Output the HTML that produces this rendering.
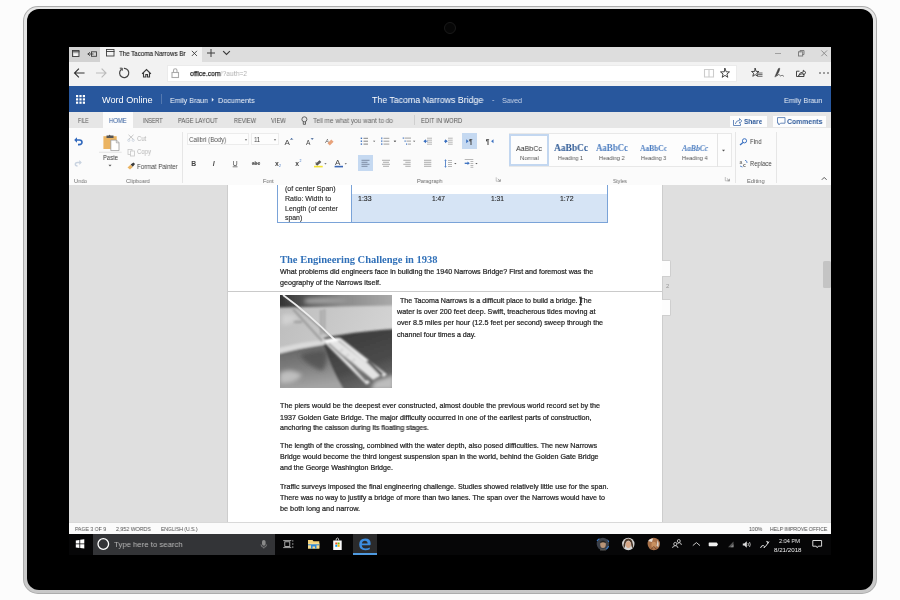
<!DOCTYPE html>
<html><head><meta charset="utf-8">
<style>
*{margin:0;padding:0;box-sizing:border-box}
html,body{width:900px;height:600px;overflow:hidden;background:#fcfcfc;font-family:"Liberation Sans",sans-serif;position:relative}
.a{position:absolute}
.t{position:absolute;white-space:nowrap;line-height:1;will-change:transform}
svg{position:absolute;overflow:visible;will-change:transform}
</style></head><body>
<div class="a" style="left:23px;top:6px;width:854px;height:588px;background:#acacac;border-radius:15px"></div>
<div class="a" style="left:24px;top:7px;width:852px;height:586px;background:linear-gradient(#e6e6e6,#d6d6d6 50%,#c8c8c8);border-radius:14px"></div>
<div class="a" style="left:27px;top:9px;width:846px;height:581px;background:#000;border-radius:12px"></div>
<div class="a" style="left:444px;top:22px;width:12px;height:12px;border-radius:50%;background:#060606;border:1px solid #1a1a1a"></div>
<div class="a" style="left:69px;top:47px;width:762px;height:508px;background:#dcdcdc;"></div>
<div class="a" style="left:69px;top:47px;width:762px;height:15px;background:#dddddd;"></div>
<div class="a" style="left:69px;top:47px;width:31px;height:15px;background:#d2d2d2;"></div>
<div class="a" style="left:100px;top:47px;width:102px;height:15px;background:#f2f2f2;"></div>
<div class="t" id="t0" style="left:119px;top:49.70px;font-size:7.5px;color:#222;font-family:'Liberation Sans',sans-serif;transform:scaleX(0.8237);transform-origin:0 0;-webkit-text-stroke:0.15px #333">The Tacoma Narrows Br</div>
<div class="a" style="left:69px;top:62px;width:762px;height:24px;background:#f2f2f2;"></div>
<div class="a" style="left:167px;top:65px;width:570px;height:17px;background:#fff;border:1px solid #ebebeb"></div>
<div class="t" id="t1" style="left:190px;top:69.50px;font-size:7.5px;color:#222;font-family:'Liberation Sans',sans-serif;transform:scaleX(0.8983);transform-origin:0 0;"><span style="-webkit-text-stroke:0.25px #222">office.com</span><span style="color:#b0b0b0">/?auth=2</span></div>
<svg style="left:0;top:0" width="900" height="600" viewBox="0 0 900 600" fill="none" stroke-linecap="square">
<g stroke="#3c3c3c" stroke-width="1.1">
<!-- tab preview -->
<rect x="72.5" y="50.5" width="6.5" height="6" stroke-width="0.9"/>
<path d="M72.5 51.8H79" stroke-width="0.9"/>
<rect x="73.8" y="53.6" width="3.9" height="2.4" fill="#f4f4f4" stroke="none"/>
<!-- set aside -->
<rect x="91.5" y="51.8" width="5" height="4.5" stroke-width="0.9"/>
<path d="M88 54H93M89.5 52.5L88 54L89.5 55.5" stroke-width="0.9"/>
<!-- favicon -->
<rect x="106.5" y="49.5" width="7.5" height="6.5" stroke-width="0.9"/>
<path d="M106.5 51.5H114" stroke-width="0.9"/>
<!-- close tab -->
<path d="M192.2 51.2L196.6 55.6M196.6 51.2L192.2 55.6" stroke-width="0.9"/>
<!-- plus -->
<path d="M211 49.5V56.5M207.5 53H214.5" stroke-width="1"/>
<!-- chevron -->
<path d="M223.5 51.5L226.5 54.5L229.5 51.5"/>
<!-- window controls -->
<path d="M775.5 53.5H780.5" stroke="#999" stroke-width="0.9"/>
<rect x="798.5" y="51.8" width="4.2" height="4.2" stroke="#777" stroke-width="0.9"/>
<path d="M800 51.8V50.5H804V54.5H802.7" stroke="#777" stroke-width="0.9"/>
<path d="M821.7 50.8L826.7 55.8M826.7 50.8L821.7 55.8" stroke="#888" stroke-width="0.9"/>
<!-- back -->
<path d="M74.5 73H84M78.5 69L74.5 73L78.5 77" stroke="#333"/>
<!-- fwd -->
<path d="M96.5 73H106M102 69L106 73L102 77" stroke="#bbb"/>
<!-- refresh -->
<path d="M121.2 69.5A4.6 4.6 0 1 0 124.5 68.4" stroke="#444" stroke-width="1.2"/>
<path d="M120.3 68.2L122.3 68.2L122.3 70.2" stroke="#444" stroke-width="1"/>
<!-- home -->
<path d="M142.5 73.5L146.5 69.5L150.5 73.5M143.5 72.5V77H145.8V74.5H147.5V77H149.5V72.5" stroke="#3a3a3a"/>
<!-- lock -->
<rect x="172" y="72.5" width="6.5" height="5" stroke="#aaa"/>
<path d="M173.5 72.5V70.5A1.75 1.75 0 0 1 177 70.5V72.5" stroke="#aaa"/>
<!-- reading view -->
<path d="M704.5 69.5H709V77H704.5ZM709 69.5H713.5V77H709Z" stroke="#ccc"/>
<!-- star -->
<path d="M725 68.5L726.2 71.8L729.5 71.9L726.9 74L727.8 77.3L725 75.4L722.2 77.3L723.1 74L720.5 71.9L723.8 71.8Z" stroke="#333" stroke-width="0.9" stroke-linejoin="miter"/>
<!-- hub -->
<path d="M755.2 68.5L756.2 71.4L759 71.5L756.8 73.2L757.6 76.3L755.2 74.6L752.8 76.3L753.6 73.2L751.5 71.5L754.2 71.4Z" stroke="#333" stroke-width="0.9"/>
<path d="M757.5 73H762M758 74.6H762M758.5 76.3H762" stroke="#444" stroke-width="0.8"/>
<!-- pen -->
<path d="M775 76.5L778.3 68.8Q779.5 67.2 779.8 68.8Q779.6 71.5 776.2 76.2Z" fill="#444" stroke="#444" stroke-width="0.5"/>
<path d="M777 75.8Q778.5 73.5 779.5 75Q780.5 76.5 781.5 75.5Q782.5 75 783.5 76" stroke="#444" stroke-width="0.8"/>
<!-- share -->
<path d="M799 71.2H796.5V76.5H804V74.5" stroke="#333" stroke-width="0.9"/>
<path d="M798.8 75.2Q799.5 72 803.3 72V70.2L806 72.6L803.3 75V73.6Q801 73.6 798.8 75.2Z" stroke="#333" stroke-width="0.9" stroke-linejoin="round"/>
</g>
<g fill="#333"><circle cx="820" cy="73" r="0.8"/><circle cx="824" cy="73" r="0.8"/><circle cx="828" cy="73" r="0.8"/></g>
</svg>
<div class="a" style="left:69px;top:86px;width:762px;height:26px;background:#28579d;"></div>
<div class="t" id="t2" style="left:102px;top:95.80px;font-size:9px;color:#fff;font-family:'Liberation Sans',sans-serif;transform:scaleX(1.0149);transform-origin:0 0;">Word Online</div>
<div class="a" style="left:161px;top:94px;width:1px;height:10px;background:#5479b0;"></div>
<div class="t" id="t3" style="left:169.7px;top:96.70px;font-size:7.5px;color:#f2f5fa;font-family:'Liberation Sans',sans-serif;transform:scaleX(0.9397);transform-origin:0 0;">Emily Braun</div>
<div class="t" id="t4" style="left:217.8px;top:96.70px;font-size:7.5px;color:#f2f5fa;font-family:'Liberation Sans',sans-serif;transform:scaleX(0.9647);transform-origin:0 0;">Documents</div>
<div class="t" id="t5" style="left:371.6px;top:96.10px;font-size:9px;color:#fff;font-family:'Liberation Sans',sans-serif;transform:scaleX(0.9781);transform-origin:0 0;">The Tacoma Narrows Bridge</div>
<div class="t" id="t6" style="left:491.5px;top:96.00px;font-size:7.5px;color:#c9d5ea;font-family:'Liberation Sans',sans-serif;">-</div>
<div class="t" id="t7" style="left:502px;top:96.82px;font-size:7.5px;color:#c9d5ea;font-family:'Liberation Sans',sans-serif;transform:scaleX(0.9398);transform-origin:0 0;">Saved</div>
<div class="t" id="t8" style="left:783.7px;top:96.82px;font-size:7.5px;color:#e8eef7;font-family:'Liberation Sans',sans-serif;transform:scaleX(0.9471);transform-origin:0 0;">Emily Braun</div>
<div class="a" style="left:69px;top:112px;width:762px;height:16px;background:#e6e6e6;"></div>
<div class="a" style="left:103px;top:112px;width:30px;height:16px;background:#fcfcfc;"></div>
<div class="t" id="t9" style="left:78px;top:118.30px;font-size:6.8px;color:#555;font-family:'Liberation Sans',sans-serif;transform:scaleX(0.7452);transform-origin:0 0;">FILE</div>
<div class="t" id="t10" style="left:142.9px;top:118.30px;font-size:6.8px;color:#555;font-family:'Liberation Sans',sans-serif;transform:scaleX(0.7859);transform-origin:0 0;">INSERT</div>
<div class="t" id="t11" style="left:178px;top:118.30px;font-size:6.8px;color:#555;font-family:'Liberation Sans',sans-serif;transform:scaleX(0.8495);transform-origin:0 0;">PAGE LAYOUT</div>
<div class="t" id="t12" style="left:233.7px;top:118.30px;font-size:6.8px;color:#555;font-family:'Liberation Sans',sans-serif;transform:scaleX(0.8205);transform-origin:0 0;">REVIEW</div>
<div class="t" id="t13" style="left:271px;top:118.30px;font-size:6.8px;color:#555;font-family:'Liberation Sans',sans-serif;transform:scaleX(0.8460);transform-origin:0 0;">VIEW</div>
<div class="t" id="t14" style="left:420.6px;top:118.30px;font-size:6.8px;color:#555;font-family:'Liberation Sans',sans-serif;transform:scaleX(0.8682);transform-origin:0 0;">EDIT IN WORD</div>
<div class="t" id="t15" style="left:108.8px;top:118.30px;font-size:6.8px;color:#2b579a;font-family:'Liberation Sans',sans-serif;transform:scaleX(0.8674);transform-origin:0 0;">HOME</div>
<div class="t" id="t16" style="left:312.5px;top:118.30px;font-size:6.8px;color:#666;font-family:'Liberation Sans',sans-serif;transform:scaleX(0.9538);transform-origin:0 0;">Tell me what you want to do</div>
<div class="a" style="left:414px;top:115px;width:1px;height:10px;background:#cfcfcf;"></div>
<div class="a" style="left:730px;top:115.5px;width:36.6px;height:11px;background:#fdfdfd;"></div>
<div class="a" style="left:772.7px;top:115.5px;width:53.8px;height:11px;background:#fdfdfd;"></div>
<div class="t" id="t17" style="left:744px;top:117.70px;font-size:7.5px;color:#2f5b9b;font-family:'Liberation Sans',sans-serif;transform:scaleX(0.8773);transform-origin:0 0;font-weight:bold">Share</div>
<div class="t" id="t18" style="left:787.3px;top:117.70px;font-size:7.5px;color:#2f5b9b;font-family:'Liberation Sans',sans-serif;transform:scaleX(0.9158);transform-origin:0 0;font-weight:bold">Comments</div>
<div class="a" style="left:69px;top:128px;width:762px;height:57px;background:#fbfbfb;"></div>
<svg style="left:0;top:0" width="900" height="600" viewBox="0 0 900 600"><rect x="76.0" y="95.0" width="2.2" height="2.2" fill="#fff"/><rect x="76.0" y="98.3" width="2.2" height="2.2" fill="#fff"/><rect x="76.0" y="101.6" width="2.2" height="2.2" fill="#fff"/><rect x="79.4" y="95.0" width="2.2" height="2.2" fill="#fff"/><rect x="79.4" y="98.3" width="2.2" height="2.2" fill="#fff"/><rect x="79.4" y="101.6" width="2.2" height="2.2" fill="#fff"/><rect x="82.8" y="95.0" width="2.2" height="2.2" fill="#fff"/><rect x="82.8" y="98.3" width="2.2" height="2.2" fill="#fff"/><rect x="82.8" y="101.6" width="2.2" height="2.2" fill="#fff"/><path d="M211.8 97.8L213.8 99.8L211.8 101.8Z" fill="#e8eef7"/></svg>
<div class="t" id="t19" style="left:74px;top:179.02px;font-size:5.8px;color:#6a6a6a;font-family:'Liberation Sans',sans-serif;transform:scaleX(0.9380);transform-origin:0 0;">Undo</div>
<div class="t" id="t20" style="left:102.6px;top:154.01px;font-size:7.3px;color:#444;font-family:'Liberation Sans',sans-serif;transform:scaleX(0.8087);transform-origin:0 0;">Paste</div>
<div class="t" id="t21" style="left:136.7px;top:134.71px;font-size:7.3px;color:#b5b5b5;font-family:'Liberation Sans',sans-serif;transform:scaleX(0.8187);transform-origin:0 0;">Cut</div>
<div class="t" id="t22" style="left:137px;top:148.41px;font-size:7.3px;color:#b5b5b5;font-family:'Liberation Sans',sans-serif;transform:scaleX(0.8213);transform-origin:0 0;">Copy</div>
<div class="t" id="t23" style="left:137px;top:162.71px;font-size:7.3px;color:#444;font-family:'Liberation Sans',sans-serif;transform:scaleX(0.8433);transform-origin:0 0;">Format Painter</div>
<div class="t" id="t24" style="left:126.3px;top:179.02px;font-size:5.8px;color:#6a6a6a;font-family:'Liberation Sans',sans-serif;transform:scaleX(0.9673);transform-origin:0 0;">Clipboard</div>
<div class="a" style="left:187.3px;top:133.3px;width:62px;height:12px;background:#fdfdfd;border:1px solid #ececec"></div>
<div class="a" style="left:250.7px;top:133.3px;width:28px;height:12px;background:#fdfdfd;border:1px solid #ececec"></div>
<div class="t" id="t25" style="left:188.7px;top:136.01px;font-size:7.3px;color:#555;font-family:'Liberation Sans',sans-serif;transform:scaleX(0.8438);transform-origin:0 0;">Calibri (Body)</div>
<div class="t" id="t26" style="left:254px;top:136.01px;font-size:7.3px;color:#444;font-family:'Liberation Sans',sans-serif;transform:scaleX(0.7918);transform-origin:0 0;">11</div>
<div class="t" id="t27" style="left:263.3px;top:179.02px;font-size:5.8px;color:#6a6a6a;font-family:'Liberation Sans',sans-serif;transform:scaleX(0.9217);transform-origin:0 0;">Font</div>
<div class="t" id="t28" style="left:417.3px;top:179.02px;font-size:5.8px;color:#6a6a6a;font-family:'Liberation Sans',sans-serif;transform:scaleX(0.9380);transform-origin:0 0;">Paragraph</div>
<div class="t" id="t29" style="left:613px;top:179.02px;font-size:5.8px;color:#6a6a6a;font-family:'Liberation Sans',sans-serif;transform:scaleX(0.8673);transform-origin:0 0;">Styles</div>
<div class="t" id="t30" style="left:746.9px;top:179.02px;font-size:5.8px;color:#6a6a6a;font-family:'Liberation Sans',sans-serif;transform:scaleX(0.9755);transform-origin:0 0;">Editing</div>
<div class="t" id="t31" style="left:749.5px;top:137.62px;font-size:7.3px;color:#444;font-family:'Liberation Sans',sans-serif;transform:scaleX(0.8097);transform-origin:0 0;">Find</div>
<div class="t" id="t32" style="left:749.8px;top:159.62px;font-size:7.3px;color:#444;font-family:'Liberation Sans',sans-serif;transform:scaleX(0.8103);transform-origin:0 0;">Replace</div>
<div class="a" style="left:508.7px;top:133.3px;width:223px;height:33.4px;background:#fdfdfd;border:1px solid #e8e8e8"></div>
<div class="a" style="left:716.6px;top:133.3px;width:1px;height:33.4px;background:#e4e4e4;"></div>
<div class="a" style="left:508.8px;top:134.2px;width:39.8px;height:31.4px;background:#fdfdfd;border:2px solid #c3d7f0"></div>
<div class="t" id="t33" style="left:516.3px;top:144.71px;font-size:8px;color:#333;font-family:'Liberation Sans',sans-serif;transform:scaleX(0.8856);transform-origin:0 0;">AaBbCc</div>
<div class="t" id="t34" style="left:520px;top:155.00px;font-size:6.2px;color:#555;font-family:'Liberation Sans',sans-serif;transform:scaleX(0.9522);transform-origin:0 0;">Normal</div>
<div class="t" id="t35" style="left:553.7px;top:143.02px;font-size:10px;color:#2e5a96;font-family:'Liberation Serif',serif;transform:scaleX(0.9412);transform-origin:0 0;font-weight:bold">AaBbCc</div>
<div class="t" id="t36" style="left:558px;top:155.00px;font-size:6.2px;color:#555;font-family:'Liberation Sans',sans-serif;transform:scaleX(0.8859);transform-origin:0 0;">Heading 1</div>
<div class="t" id="t37" style="left:596px;top:144.01px;font-size:9.5px;color:#4a7cc0;font-family:'Liberation Serif',serif;transform:scaleX(0.9326);transform-origin:0 0;font-weight:bold">AaBbCc</div>
<div class="t" id="t38" style="left:599px;top:155.00px;font-size:6.2px;color:#555;font-family:'Liberation Sans',sans-serif;transform:scaleX(0.9107);transform-origin:0 0;">Heading 2</div>
<div class="t" id="t39" style="left:640px;top:145.01px;font-size:8.2px;color:#4a7cc0;font-family:'Liberation Serif',serif;transform:scaleX(0.9128);transform-origin:0 0;font-weight:bold">AaBbCc</div>
<div class="t" id="t40" style="left:640.7px;top:155.00px;font-size:6.2px;color:#555;font-family:'Liberation Sans',sans-serif;transform:scaleX(0.8966);transform-origin:0 0;">Heading 3</div>
<div class="t" id="t41" style="left:681.7px;top:145.01px;font-size:8.2px;color:#4a7cc0;font-family:'Liberation Serif',serif;transform:scaleX(0.9320);transform-origin:0 0;font-weight:bold;font-style:italic">AaBbCc</div>
<div class="t" id="t42" style="left:682px;top:155.00px;font-size:6.2px;color:#555;font-family:'Liberation Sans',sans-serif;transform:scaleX(0.9072);transform-origin:0 0;">Heading 4</div>
<div class="a" style="left:182px;top:132px;width:1px;height:51px;background:#e6e6e6;"></div>
<div class="a" style="left:734.6px;top:132px;width:1px;height:51px;background:#e6e6e6;"></div>
<div class="a" style="left:776px;top:132px;width:1px;height:51px;background:#e6e6e6;"></div>
<div class="a" style="left:358px;top:155.3px;width:15px;height:16px;background:#c5d9f1;"></div>
<div class="a" style="left:462px;top:133.3px;width:14.7px;height:16px;background:#c5d9f1;"></div>
<svg style="left:0;top:0" width="900" height="600" viewBox="0 0 900 600" fill="none">
<!-- undo -->
<path d="M75.5 140H79.5Q82 140 82 142.3Q82 144.6 79 144.6H78" stroke="#3068bd" stroke-width="1.6"/>
<path d="M74.2 140L77 137.3V142.7Z" fill="#3068bd"/>
<!-- redo (disabled) -->
<path d="M81 162.5H77.5Q75.3 162.5 75.3 164.3Q75.3 166 77.5 166" stroke="#c9d3e0" stroke-width="1.4"/>
<path d="M81.8 162.5L79.3 160V165Z" fill="#c9d3e0"/>
<!-- paste clipboard -->
<rect x="103.4" y="136.2" width="13.3" height="12.8" fill="#ebb462"/>
<path d="M106.5 138V135.6H108.8Q109.5 133.8 110.5 135.6H113.5V138Z" fill="#555"/>
<path d="M110.8 140.1H116.5L119 142.6V150.6H110.8Z" fill="#fff" stroke="#9a9a9a" stroke-width="0.8"/>
<path d="M116.3 140.1V142.8H119" stroke="#9a9a9a" stroke-width="0.7"/>
<path d="M99 152.3H121.7" stroke="#dedede" stroke-width="0.8"/>
<path d="M108.5 164.7H111.5L110 166.5Z" fill="#555"/>
<!-- cut -->
<path d="M128.5 134.8L133.5 139.5M133.5 134.8L128.5 139.5" stroke="#c0c0c0" stroke-width="0.9"/>
<circle cx="128.8" cy="140.3" r="1.1" stroke="#c8d0dc" stroke-width="0.8"/><circle cx="133.2" cy="140.3" r="1.1" stroke="#c8d0dc" stroke-width="0.8"/>
<!-- copy -->
<rect x="128" y="149.5" width="4" height="5" stroke="#c6c6c6" stroke-width="0.8"/>
<rect x="130.5" y="151" width="4" height="5" fill="#fbfbfb" stroke="#c6c6c6" stroke-width="0.8"/>
<!-- format painter -->
<path d="M127.5 167.5L130.5 164.8L132.8 167L130 169.6Z" fill="#ebb462"/>
<path d="M130.6 164.6L133.5 162.4L135 163.9L132.8 166.8Z" fill="#3a3a3a"/>
<!-- font box arrows -->
<path d="M244.8 139.3H247.2L246 140.7Z" fill="#666"/>
<path d="M273.8 139.3H276.2L275 140.7Z" fill="#666"/>
<g font-family="'Liberation Sans',sans-serif" fill="#444">
<text x="284.6" y="144.7" font-size="8">A</text>
<path d="M290.5 139.5L291.6 138.3L292.7 139.5" stroke="#3a70c0" stroke-width="0.9"/>
<text x="306" y="144.7" font-size="6.6">A</text>
<path d="M311.2 138.3L312.2 139.4L313.2 138.3" stroke="#3a70c0" stroke-width="0.9"/>
<text x="191.2" y="165.5" font-size="6.8" font-weight="bold">B</text>
<text x="212.7" y="165.5" font-size="6.8" font-style="italic" font-weight="bold">I</text>
<text x="232.7" y="165.5" font-size="6.8">U</text>
<path d="M232.7 166.8H237.5" stroke="#444" stroke-width="0.7"/>
<text x="252" y="165" font-size="5.2" font-weight="bold" textLength="8" lengthAdjust="spacingAndGlyphs">abc</text>
<path d="M251.8 163.3H260.2" stroke="#444" stroke-width="0.6"/>
<text x="275" y="165.5" font-size="6.8" font-weight="bold">x</text>
<text x="279" y="167" font-size="3.5" fill="#3a70c0">2</text>
<text x="295.3" y="165.5" font-size="6.8" font-weight="bold">x</text>
<text x="299.5" y="161.5" font-size="3.5" fill="#3a70c0">2</text>
<text x="335" y="165" font-size="8" fill="#444">A</text>
</g>
<g fill="none">
<!-- clear formatting -->
<text x="325.3" y="142.5" font-size="5.5" fill="#555" font-family="'Liberation Sans',sans-serif" font-style="italic">A</text>
<path d="M327.5 143.2L331.3 139.4L333.6 141.7L329.8 145.5Z" fill="#e8a27a"/>
<!-- highlighter -->
<path d="M315.3 164L319.5 160.3L321.3 162L317.2 165.7Z" fill="#555"/>
<path d="M315 162.8L320.5 162.8" stroke="#777" stroke-width="0.6"/>
<rect x="314" y="165.8" width="8.7" height="1.6" fill="#f3e230"/>
<path d="M324.3 163.2H326.6L325.45 164.4Z" fill="#555"/>
<rect x="334.6" y="165.8" width="8.4" height="1.6" fill="#3a66b5"/>
<path d="M344.6 163.2H346.9L345.75 164.4Z" fill="#555"/>
<!-- bullets -->
<g fill="#3a70c0"><rect x="360.7" y="137.6" width="1.4" height="1.4"/><rect x="360.7" y="140.5" width="1.4" height="1.4"/><rect x="360.7" y="143.4" width="1.4" height="1.4"/></g>
<path d="M363.5 138.3H368M363.5 141.2H368M363.5 144.1H368" stroke="#666" stroke-width="0.8"/>
<path d="M373 140.7H375.3L374.15 141.9Z" fill="#555"/>
<g fill="#3a70c0"><rect x="381.3" y="137.4" width="1" height="1.8"/><rect x="381.3" y="140.3" width="1" height="1.8"/><rect x="381.3" y="143.2" width="1" height="1.8"/></g>
<path d="M383.5 138.3H389.3M383.5 141.2H389.3M383.5 144.1H389.3" stroke="#888" stroke-width="0.8"/>
<path d="M393.6 140.7H395.9L394.75 141.9Z" fill="#555"/>
<!-- multilevel -->
<rect x="402.7" y="137.5" width="1.2" height="1.2" fill="#3a70c0"/><rect x="404.5" y="140.5" width="1.2" height="1.2" fill="#3a70c0"/><rect x="406" y="143.5" width="1.2" height="1.2" fill="#3a70c0"/>
<path d="M404.5 138.1H411M406.5 141.1H411M408 144.1H411" stroke="#888" stroke-width="0.8"/>
<path d="M413 140.7H415.3L414.15 141.9Z" fill="#555"/>
<path d="M394 140.7H396.3L395.15 141.9Z" fill="#555"/>
<!-- decrease / increase indent -->
<path d="M427 138.2H432M427 140.2H432M427 142.2H432M427 144.2H432" stroke="#999" stroke-width="0.7"/>
<path d="M423.3 141.2L426 139.2V143.2Z" fill="#3a70c0"/><path d="M424.5 141.2H427.5" stroke="#3a70c0" stroke-width="1"/>
<path d="M448 138.2H452.7M448 140.2H452.7M448 142.2H452.7M448 144.2H452.7" stroke="#999" stroke-width="0.7"/>
<path d="M447.8 141.2L445 139.2V143.2Z" fill="#3a70c0"/><path d="M444 141.2H447" stroke="#3a70c0" stroke-width="1"/>
<!-- LTR / RTL -->
<path d="M466.2 139.2L468.6 141.2L466.2 143.2Z" fill="#3a70c0"/>
<text x="469" y="143.7" font-size="6.5" fill="#444" font-family="'Liberation Sans',sans-serif" font-weight="bold">¶</text>
<text x="485.8" y="143.7" font-size="6.5" fill="#444" font-family="'Liberation Sans',sans-serif" font-weight="bold">¶</text>
<path d="M493.5 139.2L491.1 141.2L493.5 143.2Z" fill="#3a70c0"/>
<!-- align row -->
<path d="M361.5 160.3H369.5M361.5 162.3H367.5M361.5 164.3H369.5M361.5 166.3H367.5" stroke="#6b7a90" stroke-width="0.8"/>
<path d="M382 160.3H390M383 162.3H389M382 164.3H390M383 166.3H389" stroke="#999" stroke-width="0.8"/>
<path d="M403.3 160.3H410.7M405.3 162.3H410.7M403.3 164.3H410.7M405.3 166.3H410.7" stroke="#999" stroke-width="0.8"/>
<path d="M424 160.3H431.3M424 162.3H431.3M424 164.3H431.3M424 166.3H431.3" stroke="#999" stroke-width="0.8"/>
<!-- line spacing -->
<path d="M445.5 160.5V166.5" stroke="#3a70c0" stroke-width="0.8"/><path d="M444.3 160.8L445.5 159.2L446.7 160.8ZM444.3 166.2L445.5 167.8L446.7 166.2Z" fill="#3a70c0"/>
<path d="M448 160.5H452M448 162.5H452M448 164.5H452M448 166.5H452" stroke="#999" stroke-width="0.7"/>
<path d="M454.2 163H456.5L455.35 164.2Z" fill="#555"/>
<!-- para spacing -->
<path d="M464.7 163.3H468" stroke="#3a70c0" stroke-width="1.3"/><path d="M467.5 161.6L469.8 163.3L467.5 165Z" fill="#3a70c0"/>
<path d="M464.7 159.5H473.3M470.5 161.5H473.3M470.5 163.5H473.3M470.5 165.5H473.3M470.5 167.3H473.3" stroke="#999" stroke-width="0.7"/>
<path d="M475.3 163H477.6L476.45 164.2Z" fill="#555"/>
<!-- dialog launchers -->
<path d="M496.2 177.3V181.2H500.4" stroke="#aaa" stroke-width="0.7"/><path d="M497.8 178.8L500.4 181.2M500.4 179.2V181.2H498.4" stroke="#888" stroke-width="0.7"/>
<path d="M725.3 177V180.8H729.5" stroke="#aaa" stroke-width="0.7"/><path d="M726.9 178.5L729.5 180.8M729.5 178.8V180.8H727.5" stroke="#888" stroke-width="0.7"/>
<!-- gallery more -->
<path d="M722 149.8H725L723.5 151.6Z" fill="#555"/>
<!-- find -->
<circle cx="744.5" cy="140.8" r="2.1" stroke="#3a70c0" stroke-width="1"/>
<path d="M743 142.5L740 145" stroke="#3a70c0" stroke-width="1.3"/>
<!-- replace -->
<text x="739.5" y="164" font-size="5" fill="#777" font-family="'Liberation Sans',sans-serif" font-weight="bold">a</text>
<text x="743" y="166.5" font-size="5" fill="#555" font-family="'Liberation Sans',sans-serif" font-weight="bold">c</text>
<path d="M740 166L742.5 167M745 160.2Q747.5 161 747 163" stroke="#3a70c0" stroke-width="0.8"/>
<!-- collapse -->
<path d="M821.8 179.8L824.2 177.4L826.6 179.8" stroke="#555" stroke-width="1"/>
<!-- bulb icon -->
<circle cx="304.4" cy="119.3" r="2.5" stroke="#555" stroke-width="0.9"/>
<path d="M303.3 122V124.3H305.5V122" stroke="#555" stroke-width="0.9"/>
<!-- share icon -->
<path d="M733.5 120V125.5H740.5V123.5" stroke="#5a7fb5" stroke-width="0.9"/>
<path d="M735.3 124Q736 120.5 739.5 120.3V118.5L741.8 121L739.5 123.3V121.8" stroke="#5a7fb5" stroke-width="0.9"/>
<!-- comments icon -->
<path d="M777.5 117.6H785V123.2H780.5L778.8 125V123.2H777.5Z" stroke="#5a7fb5" stroke-width="0.9"/>
<!-- scroll arrows -->
<path d="M824.8 191L826.8 189L828.8 191" stroke="#888" stroke-width="0.8"/>
<path d="M824.8 517.3L826.8 519.3L828.8 517.3" stroke="#888" stroke-width="0.8"/>
</g>
</svg>

<div class="a" style="left:69px;top:185px;width:762px;height:337px;background:#dfdfdf;"></div>
<div class="a" style="left:822.5px;top:261px;width:8px;height:27px;background:#c4c4c4;border-radius:1.5px"></div>
<div class="a" style="left:227px;top:185px;width:1px;height:337px;background:#cdcdcd;"></div>
<div class="a" style="left:662px;top:185px;width:1px;height:337px;background:#cdcdcd;"></div>
<div class="a" style="left:228px;top:185px;width:434px;height:337px;background:#fff;"></div>
<div class="a" style="left:228px;top:291px;width:434px;height:1.2px;background:#cacaca;"></div>
<div class="a" style="left:662px;top:260.4px;width:9.3px;height:16.8px;background:#fdfdfd;border:1px solid #cfcfcf;border-left:none;border-radius:0 1.5px 1.5px 0"></div>
<div class="a" style="left:662px;top:299.4px;width:9.3px;height:16.8px;background:#fdfdfd;border:1px solid #cfcfcf;border-left:none;border-radius:0 1.5px 1.5px 0"></div>
<div class="t" id="t43" style="left:666.3px;top:283.21px;font-size:6px;color:#999;font-family:'Liberation Sans',sans-serif;transform:scaleX(0.9869);transform-origin:0 0;">2</div>
<div class="a" style="left:69px;top:522px;width:762px;height:12px;background:#fbfbfb;border-top:1px solid #d9d9d9"></div>
<div class="t" id="t44" style="left:75.2px;top:525.81px;font-size:6px;color:#555;font-family:'Liberation Sans',sans-serif;transform:scaleX(0.8583);transform-origin:0 0;">PAGE 3 OF 9</div>
<div class="t" id="t45" style="left:115.7px;top:525.81px;font-size:6px;color:#4a4a4a;font-family:'Liberation Sans',sans-serif;transform:scaleX(0.8794);transform-origin:0 0;">2,952 WORDS</div>
<div class="t" id="t46" style="left:160.8px;top:525.81px;font-size:6px;color:#4a4a4a;font-family:'Liberation Sans',sans-serif;transform:scaleX(0.8355);transform-origin:0 0;">ENGLISH (U.S.)</div>
<div class="t" id="t47" style="left:749.2px;top:525.81px;font-size:6px;color:#4a4a4a;font-family:'Liberation Sans',sans-serif;transform:scaleX(0.8724);transform-origin:0 0;">100%</div>
<div class="t" id="t48" style="left:770px;top:525.81px;font-size:6px;color:#4a4a4a;font-family:'Liberation Sans',sans-serif;transform:scaleX(0.8341);transform-origin:0 0;">HELP IMPROVE OFFICE</div>
<div class="a" style="left:69px;top:534px;width:762px;height:21px;background:#060607;"></div>
<div class="a" style="left:93px;top:534px;width:182.3px;height:20.5px;background:#333437;"></div>
<div class="a" style="left:352.6px;top:534px;width:24.6px;height:20.5px;background:#2a2a2b;"></div>
<div class="a" style="left:352.6px;top:552.5px;width:24.6px;height:2px;background:#4f9ae0;"></div>
<div class="t" id="t49" style="left:114.3px;top:541.01px;font-size:8px;color:#b8b8b8;font-family:'Liberation Sans',sans-serif;transform:scaleX(0.9715);transform-origin:0 0;">Type here to search</div>
<div class="t" id="t50" style="left:779.2px;top:537.81px;font-size:6.2px;color:#eee;font-family:'Liberation Sans',sans-serif;transform:scaleX(0.9068);transform-origin:0 0;">2:04 PM</div>
<div class="t" id="t51" style="left:774.2px;top:546.50px;font-size:6.2px;color:#eee;font-family:'Liberation Sans',sans-serif;">8/21/2018</div>
<svg style="left:0;top:0" width="900" height="600" viewBox="0 0 900 600" fill="none">
<!-- windows logo -->
<path d="M75.8 540.4L79.4 539.9V543.5H75.8Z M80.2 539.8L84.3 539.2V543.5H80.2Z M75.8 544.3H79.4V547.9L75.8 547.4Z M80.2 544.3H84.3V548.6L80.2 548Z" fill="#fff"/>
<!-- cortana -->
<circle cx="103.3" cy="544" r="5.3" stroke="#fff" stroke-width="1.3"/>
<!-- mic -->
<rect x="262" y="540" width="3.6" height="5.8" rx="1.8" fill="#8a8a8a"/>
<path d="M261 544.5Q261 547.3 263.8 547.3Q266.6 547.3 266.6 544.5M263.8 547.3V548.5" stroke="#8a8a8a" stroke-width="0.8"/>
<!-- task view -->
<rect x="284.8" y="541.8" width="5" height="4.6" stroke="#ccc" stroke-width="0.8"/>
<path d="M283.2 540.6H291.3M283.2 547.6H291.3" stroke="#ccc" stroke-width="0.8"/>
<path d="M292.8 540.3V541.5M292.8 543.3V544.7M292.8 546.4V547.8" stroke="#ccc" stroke-width="0.9"/>
<!-- explorer -->
<path d="M308 540H312.5L313.5 541.3H319.3V548.5H308Z" fill="#f5d37a"/>
<path d="M308 543H319.3V548.5H308Z" fill="#f8dc8c"/>
<path d="M311 545H316.5V548.8H315V546.6H312.5V548.8H311Z" fill="#2f88d8"/>
<path d="M308 544.8H319.3" stroke="#2f88d8" stroke-width="1"/>
<!-- store -->
<path d="M336 540.5Q336 538 337.4 538Q338.8 538 338.8 540.5" stroke="#eee" stroke-width="0.8"/>
<rect x="333.2" y="540.5" width="8.5" height="9.5" fill="#fafafa"/>
<rect x="335.3" y="542.5" width="2" height="2" fill="#f05022"/><rect x="337.6" y="542.5" width="2" height="2" fill="#7fba00"/>
<rect x="335.3" y="544.8" width="2" height="2" fill="#00a4ef"/><rect x="337.6" y="544.8" width="2" height="2" fill="#ffb900"/>
<!-- edge -->
<path d="M370 545.3H361.8Q362.2 548.5 365.6 548.5Q368 548.5 369.8 547.4V549.3Q368 550.3 365.3 550.3Q359.2 550.3 359.2 544.6Q359.2 538.6 365.2 538.6Q370.7 538.6 370.7 544Q370.7 544.7 370 545.3ZM361.9 543.6H367.6Q367.6 540.8 364.9 540.8Q362.3 540.8 361.9 543.6Z" fill="#3d8de0"/>
<!-- avatars -->
<defs><filter id="ab" x="-20%" y="-20%" width="140%" height="140%"><feGaussianBlur stdDeviation="0.5"/></filter></defs>
<g filter="url(#ab)">
<circle cx="602.9" cy="544" r="6.2" fill="#3a3f48"/>
<path d="M597 541A6.2 6.2 0 0 1 599.5 538.8" stroke="#3d7fd0" stroke-width="1.1"/><path d="M608.6 546A6.2 6.2 0 0 1 606 549.4" stroke="#3d7fd0" stroke-width="1.1"/><path d="M608.8 542A6.2 6.2 0 0 0 607.5 539.8" stroke="#3d7fd0" stroke-width="1"/>
<ellipse cx="603" cy="544.5" rx="2.8" ry="3.6" fill="#b89478"/>
<path d="M600 542Q603 538.8 606 542L605.5 543Q603 541.5 600.5 543Z" fill="#222"/>
<path d="M600.5 548Q603 550.5 605.5 548L606 550.5H600Z" fill="#555"/>
<circle cx="628.3" cy="544" r="6.2" fill="#d4d4d4"/>
<path d="M623.8 549Q622.5 539 628.3 538.6Q634 539 632.8 549Q631 546 631 543Q630 540.5 628.3 540.5Q626.5 540.5 625.6 543Q625.5 546 623.8 549Z" fill="#4a3628"/>
<ellipse cx="628.3" cy="544.6" rx="2.6" ry="3.4" fill="#d8a888"/>
<circle cx="653.8" cy="544" r="6.2" fill="#a9714a"/>
<path d="M648 541Q650 538 653 538.5L652 542Z" fill="#e8e0d8"/>
<ellipse cx="653.8" cy="545" rx="2.4" ry="3.2" fill="#c89060"/>
<path d="M651 549.5L653.8 546.5L656.6 549.5" stroke="#6a4028" stroke-width="0.9"/>
<path d="M657.5 540Q659.5 543 658.5 547L656.5 546Z" fill="#d8d0c8"/>
</g>
<!-- people -->
<circle cx="675.3" cy="544" r="1.6" stroke="#ddd" stroke-width="0.8"/>
<path d="M672.5 548Q672.7 545.7 675.3 545.7Q677.9 545.7 678 548" stroke="#ddd" stroke-width="0.8"/>
<circle cx="678.8" cy="541" r="1.5" stroke="#ddd" stroke-width="0.8"/>
<path d="M677.6 544Q678.3 542.6 679 542.6Q681.3 542.6 681.4 545" stroke="#ddd" stroke-width="0.8"/>
<!-- chevron up -->
<path d="M692.8 545.6L696.4 542.6L700 545.6" stroke="#ddd" stroke-width="0.9"/>
<!-- battery -->
<rect x="708.7" y="542.5" width="8.4" height="3.7" rx="0.6" fill="#f0f0f0"/><rect x="717.1" y="543.5" width="0.8" height="1.7" fill="#f0f0f0"/>
<!-- wifi dim -->
<path d="M728 547.2L733.5 541.5V547.2Z" fill="#555"/>
<path d="M730.5 547.2L733.5 544.2V547.2Z" fill="#888"/>
<!-- volume -->
<path d="M742.8 543.5H744.3L746.8 541.3V547.7L744.3 545.5H742.8Z" fill="#ddd"/>
<path d="M748 543Q748.8 544.5 748 546M749.5 542Q751 544.5 749.5 547" stroke="#ddd" stroke-width="0.8"/>
<!-- pen -->
<path d="M760.5 548Q761.5 545 763.5 545.5Q765 546 764 547.5Q763.5 548.5 765.5 546.5L769 541.5" stroke="#ddd" stroke-width="1"/>
<path d="M766.5 541.3L768.7 543" stroke="#ddd" stroke-width="1.2"/>
<!-- action center -->
<path d="M812.8 540.5H821.6V546.2H818.2L817.2 547.7L816.2 546.2H812.8Z" stroke="#eee" stroke-width="0.9"/>
</svg>

<div class="a" style="left:351.5px;top:193.5px;width:256px;height:29.2px;background:#d6e4f5;"></div>
<div class="a" style="left:277.2px;top:185px;width:1.2px;height:38.3px;background:#7aa3d8;"></div>
<div class="a" style="left:350.5px;top:185px;width:1.2px;height:38.3px;background:#7aa3d8;"></div>
<div class="a" style="left:606.5px;top:185px;width:1.2px;height:38.3px;background:#7aa3d8;"></div>
<div class="a" style="left:277.2px;top:222px;width:330.5px;height:1.3px;background:#7aa3d8;"></div>
<div class="t" id="t52" style="left:284.8px;top:186.10px;font-size:6.8px;color:#222;font-family:'Liberation Sans',sans-serif;transform:scaleX(1.0379);transform-origin:0 0;-webkit-text-stroke:0.12px #333">(of center Span)</div>
<div class="t" id="t53" style="left:284.8px;top:195.91px;font-size:6.8px;color:#222;font-family:'Liberation Sans',sans-serif;transform:scaleX(1.0364);transform-origin:0 0;-webkit-text-stroke:0.12px #333">Ratio: Width to</div>
<div class="t" id="t54" style="left:284.8px;top:205.71px;font-size:6.8px;color:#222;font-family:'Liberation Sans',sans-serif;transform:scaleX(1.0294);transform-origin:0 0;-webkit-text-stroke:0.12px #333">Length (of center</div>
<div class="t" id="t55" style="left:284.8px;top:215.30px;font-size:6.8px;color:#222;font-family:'Liberation Sans',sans-serif;transform:scaleX(1.0108);transform-origin:0 0;-webkit-text-stroke:0.12px #333">span)</div>
<div class="t" id="t56" style="left:358.1px;top:195.51px;font-size:6.6px;color:#222;font-family:'Liberation Sans',sans-serif;transform:scaleX(1.0589);transform-origin:0 0;-webkit-text-stroke:0.12px #333">1:33</div>
<div class="t" id="t57" style="left:431.8px;top:195.51px;font-size:6.6px;color:#222;font-family:'Liberation Sans',sans-serif;transform:scaleX(1.0122);transform-origin:0 0;-webkit-text-stroke:0.12px #333">1:47</div>
<div class="t" id="t58" style="left:490.8px;top:195.51px;font-size:6.6px;color:#222;font-family:'Liberation Sans',sans-serif;transform:scaleX(1.0122);transform-origin:0 0;-webkit-text-stroke:0.12px #333">1:31</div>
<div class="t" id="t59" style="left:559.5px;top:195.51px;font-size:6.6px;color:#222;font-family:'Liberation Sans',sans-serif;transform:scaleX(1.0511);transform-origin:0 0;-webkit-text-stroke:0.12px #333">1:72</div>
<div class="t" id="t60" style="left:280.3px;top:254.90px;font-size:10.5px;color:#3070b8;font-family:'Liberation Serif',serif;font-weight:bold">The Engineering Challenge in 1938</div>
<div class="t" id="t61" style="left:280px;top:269.01px;font-size:7.1px;color:#1c1c1c;font-family:'Liberation Sans',sans-serif;transform:scaleX(1.0058);transform-origin:0 0;-webkit-text-stroke:0.22px #2a2a2a">What problems did engineers face in building the 1940 Narrows Bridge? First and foremost was the</div>
<div class="t" id="t62" style="left:280px;top:279.81px;font-size:7.1px;color:#1c1c1c;font-family:'Liberation Sans',sans-serif;transform:scaleX(1.0084);transform-origin:0 0;-webkit-text-stroke:0.22px #2a2a2a">geography of the Narrows itself.</div>
<div class="t" id="t63" style="left:399.5px;top:298.21px;font-size:7.1px;color:#1c1c1c;font-family:'Liberation Sans',sans-serif;-webkit-text-stroke:0.22px #2a2a2a">The Tacoma Narrows is a difficult place to build a bridge. The</div>
<div class="t" id="t64" style="left:397.2px;top:309.21px;font-size:7.1px;color:#1c1c1c;font-family:'Liberation Sans',sans-serif;transform:scaleX(1.0124);transform-origin:0 0;-webkit-text-stroke:0.22px #2a2a2a">water is over 200 feet deep. Swift, treacherous tides moving at</div>
<div class="t" id="t65" style="left:397.2px;top:320.42px;font-size:7.1px;color:#1c1c1c;font-family:'Liberation Sans',sans-serif;transform:scaleX(1.0090);transform-origin:0 0;-webkit-text-stroke:0.22px #2a2a2a">over 8.5 miles per hour (12.5 feet per second) sweep through the</div>
<div class="t" id="t66" style="left:397.2px;top:331.51px;font-size:7.1px;color:#1c1c1c;font-family:'Liberation Sans',sans-serif;-webkit-text-stroke:0.22px #2a2a2a">channel four times a day.</div>
<div class="t" id="t67" style="left:279.9px;top:403.21px;font-size:7.1px;color:#1c1c1c;font-family:'Liberation Sans',sans-serif;transform:scaleX(1.0131);transform-origin:0 0;-webkit-text-stroke:0.22px #2a2a2a">The piers would be the deepest ever constructed, almost double the previous world record set by the</div>
<div class="t" id="t68" style="left:279.9px;top:414.62px;font-size:7.1px;color:#1c1c1c;font-family:'Liberation Sans',sans-serif;transform:scaleX(1.0152);transform-origin:0 0;-webkit-text-stroke:0.22px #2a2a2a">1937 Golden Gate Bridge. The major difficulty occurred in one of the earliest parts of construction,</div>
<div class="t" id="t69" style="left:279.9px;top:425.42px;font-size:7.1px;color:#1c1c1c;font-family:'Liberation Sans',sans-serif;transform:scaleX(0.9962);transform-origin:0 0;-webkit-text-stroke:0.22px #2a2a2a">anchoring the caisson during its floating stages.</div>
<div class="t" id="t70" style="left:279.9px;top:443.12px;font-size:7.1px;color:#1c1c1c;font-family:'Liberation Sans',sans-serif;transform:scaleX(1.0149);transform-origin:0 0;-webkit-text-stroke:0.22px #2a2a2a">The length of the crossing, combined with the water depth, also posed difficulties. The new Narrows</div>
<div class="t" id="t71" style="left:279.9px;top:454.31px;font-size:7.1px;color:#1c1c1c;font-family:'Liberation Sans',sans-serif;transform:scaleX(1.0086);transform-origin:0 0;-webkit-text-stroke:0.22px #2a2a2a">Bridge would become the third longest suspension span in the world, behind the Golden Gate Bridge</div>
<div class="t" id="t72" style="left:279.9px;top:465.31px;font-size:7.1px;color:#1c1c1c;font-family:'Liberation Sans',sans-serif;-webkit-text-stroke:0.22px #2a2a2a">and the George Washington Bridge.</div>
<div class="t" id="t73" style="left:279.9px;top:483.81px;font-size:7.1px;color:#1c1c1c;font-family:'Liberation Sans',sans-serif;transform:scaleX(1.0073);transform-origin:0 0;-webkit-text-stroke:0.22px #2a2a2a">Traffic surveys imposed the final engineering challenge. Studies showed relatively little use for the span.</div>
<div class="t" id="t74" style="left:279.9px;top:494.81px;font-size:7.1px;color:#1c1c1c;font-family:'Liberation Sans',sans-serif;transform:scaleX(1.0090);transform-origin:0 0;-webkit-text-stroke:0.22px #2a2a2a">There was no way to justify a bridge of more than two lanes. The span over the Narrows would have to</div>
<div class="t" id="t75" style="left:279.9px;top:506.01px;font-size:7.1px;color:#1c1c1c;font-family:'Liberation Sans',sans-serif;transform:scaleX(1.0257);transform-origin:0 0;-webkit-text-stroke:0.22px #2a2a2a">be both long and narrow.</div>
<svg style="left:280px;top:295px" width="112" height="93" viewBox="0 0 112 93">
<defs>
<linearGradient id="gTop" x1="0" y1="0" x2="1" y2="0"><stop offset="0" stop-color="#303030"/><stop offset="0.25" stop-color="#585858"/><stop offset="0.55" stop-color="#8a8a8a"/><stop offset="1" stop-color="#aaaaaa"/></linearGradient>
<linearGradient id="gSky" x1="0" y1="0" x2="1" y2="0.4"><stop offset="0" stop-color="#bcbcbc"/><stop offset="0.5" stop-color="#c8c8c8"/><stop offset="1" stop-color="#d4d4d4"/></linearGradient>
<linearGradient id="gLand" x1="0" y1="0" x2="0.4" y2="1"><stop offset="0" stop-color="#383838"/><stop offset="0.7" stop-color="#4a4a4a"/><stop offset="1" stop-color="#666"/></linearGradient>
<linearGradient id="gLow" x1="0" y1="0" x2="0.2" y2="1"><stop offset="0" stop-color="#606060"/><stop offset="0.5" stop-color="#7c7c7c"/><stop offset="1" stop-color="#a4a4a4"/></linearGradient>
<filter id="bl" x="-10%" y="-10%" width="120%" height="120%"><feGaussianBlur stdDeviation="0.85"/></filter>
<filter id="bl2" x="-10%" y="-10%" width="120%" height="120%"><feGaussianBlur stdDeviation="2.2"/></filter>
<clipPath id="cp"><rect width="112" height="93"/></clipPath>
</defs>
<g clip-path="url(#cp)">
<rect width="112" height="93" fill="url(#gSky)"/>
<g filter="url(#bl)">
<path d="M-2 -2H114V10.5Q60 11.5 -2 12.5Z" fill="url(#gTop)"/>
<!-- land -->
<path d="M44 43Q70 37 114 34V95H62Q50 70 44 52Z" fill="url(#gLand)"/>
<!-- lower left region -->
<path d="M-2 58Q22 53 44 50Q50 72 64 95H-2Z" fill="url(#gLow)"/>
<!-- light streak -->
<path d="M-2 53Q22 47 46 44.5L45 49Q22 53 -2 59Z" fill="#dadada"/>
</g>
<g filter="url(#bl2)">
<path d="M25 4Q45 2 70 5Q50 9 25 8Z" fill="#a8a8a8"/>
<path d="M2 20Q10 18 18 22Q12 30 2 30Z" fill="#d2d2d2"/>
<path d="M20 60Q35 55 46 56Q48 70 42 76Q26 70 20 60Z" fill="#4a4a4a" opacity="0.7"/>
<path d="M0 78Q10 72 22 80Q14 90 0 88Z" fill="#c4c4c4" opacity="0.9"/>
<path d="M95 86L114 80V95H90Z" fill="#bdbdbd"/>
</g>
<g filter="url(#bl)">
<path d="M13 14L42 46" stroke="#8c8c8c" stroke-width="1.4"/>
<path d="M40 15H42V40H40Z M43.3 14H45.3V39H43.3Z" fill="#a6a6a6"/>
<path d="M14 27H22" stroke="#666" stroke-width="0.8"/>
</g>
<!-- cable -->
<path d="M3 0Q28 18 56 46" stroke="#555" stroke-width="1" filter="url(#bl)" transform="translate(-1,0.8)" fill="none"/>
<path d="M3 0Q28 18 56 46" stroke="#ececec" stroke-width="1.8" fill="none"/>
<!-- approach -->
<g filter="url(#bl)">
<path d="M48 48L58 45.5L102 80L93 85Z" fill="#e4e4e4"/>
<path d="M43.5 46.5L47 45L90 87.5L86.5 89.5Z" fill="#f2f2f2"/>
<path d="M47.5 48.5L49 47.8L91 86.5L89.5 87.5Z" fill="#7a7a7a"/>
<path d="M57 44L60.5 43L107 79.5L103.5 82Z" fill="#ececec"/>
<path d="M72 71.5L75 69.5L88.5 85L85.5 86.5Z" fill="#777"/>
<path d="M86 66.5L89 65L103.5 79L100.5 81Z" fill="#5a5a5a"/>
<path d="M43.5 45.5Q50 42 60.5 43L58 46L47 48.5Z" fill="#fafafa"/>
<path d="M60 56L63 54.5M66 61L69 59.5M72 66L75 64.5" stroke="#999" stroke-width="0.6"/>
</g>
</g>
</svg>

<svg style="left:0;top:0" width="900" height="600" viewBox="0 0 900 600"><path d="M579 297.2H582M580.5 297.2V304.8M579 304.8H582" stroke="#333" stroke-width="1.1" fill="none"/></svg></body></html>
